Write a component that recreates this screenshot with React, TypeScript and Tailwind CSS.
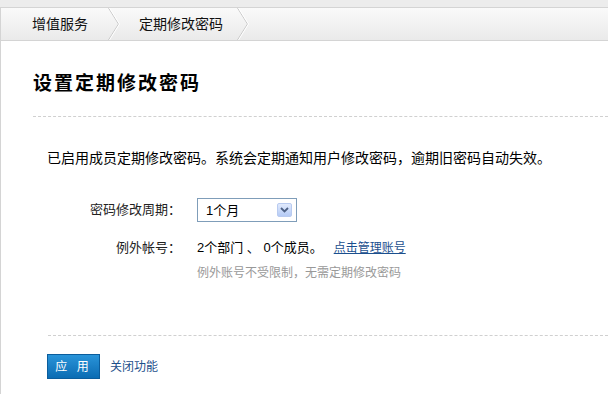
function Chevron() {
  return (
    <svg width="13" height="32" viewBox="0 0 13 32" className="block shrink-0">
      <polyline points="1.5,0 11.5,16 1.5,32" fill="none" stroke="#c8c8c8" strokeWidth="1" />
      <polyline points="2.5,0 12.5,16 2.5,32" fill="none" stroke="#ffffff" strokeWidth="1" />
    </svg>
  );
}

export default function App() {
  return (
    <div className="w-[608px] h-[394px] overflow-hidden bg-white font-['Liberation_Sans','Noto_Sans_CJK_SC',sans-serif] text-black">
      <div className="h-[7px] bg-[#ececec]" />
      <div className="h-[387px] border-l border-[#d4d4d4]">
        <div className="flex h-[34px] items-stretch border-y border-[#d4d4d4] bg-gradient-to-b from-[#fafafa] to-[#eaeaea] text-[14px] text-[#111]">
          <span className="flex items-center pl-[31px] pr-[19px]">增值服务</span>
          <Chevron />
          <span className="flex items-center pl-[19px] pr-[13px]">定期修改密码</span>
          <Chevron />
        </div>

        <div className="pl-[32px] pt-[31px]">
          <h1 className="text-[19px] font-bold leading-[24px] tracking-[2px] text-black">设置定期修改密码</h1>
        </div>
        <div className="ml-[32px] mt-[20px] border-t border-dashed border-[#d0d0d0]" />

        <p className="ml-[46px] mt-[31px] text-[14px] leading-[20px] text-black">
          已启用成员定期修改密码。系统会定期通知用户修改密码，逾期旧密码自动失效。
        </p>

        <div className="mt-[30px] flex h-[24px] items-center">
          <div className="w-[180px] text-right text-[13px] text-[#222]">密码修改周期：</div>
          <div className="ml-[16px] flex h-[24px] w-[100px] items-center justify-between border border-[#7f9db9] bg-white pl-[8px] pr-[4px]">
            <span className="text-[13px] leading-none text-black">1个月</span>
            <span className="flex h-[14px] w-[15px] items-center justify-center rounded-[2px] border border-[#b9cbf0] bg-gradient-to-b from-[#e1eafd] to-[#b5cbf5]">
              <svg width="9" height="6" viewBox="0 0 9 6">
                <polyline points="1,1 4.5,4.5 8,1" fill="none" stroke="#4d6185" strokeWidth="1.8" />
              </svg>
            </span>
          </div>
        </div>

        <div className="mt-[16px] flex h-[20px] items-center">
          <div className="w-[180px] text-right text-[13px] text-[#222]">例外帐号：</div>
          <div className="ml-[16px] text-[13px] text-black">2个部门 、 0个成员。</div>
          <a className="ml-[11px] text-[12px] text-[#1b4f8e] underline">点击管理账号</a>
        </div>
        <div className="ml-[196px] mt-[6px] text-[12px] leading-[18px] text-[#999]">例外账号不受限制，无需定期修改密码</div>

        <div className="ml-[47px] mt-[53px] border-t border-dashed border-[#d0d0d0]" />

        <div className="ml-[46px] mt-[18px] flex items-center">
          <button className="flex h-[25px] w-[53px] items-center justify-center border border-[#0b5d9c] bg-gradient-to-b from-[#2994d9] to-[#0a6cb3] text-[12px] tracking-[3px] text-white">
            应 用
          </button>
          <a className="ml-[10px] text-[12px] text-[#1d4f8b]">关闭功能</a>
        </div>
      </div>
    </div>
  );
}
